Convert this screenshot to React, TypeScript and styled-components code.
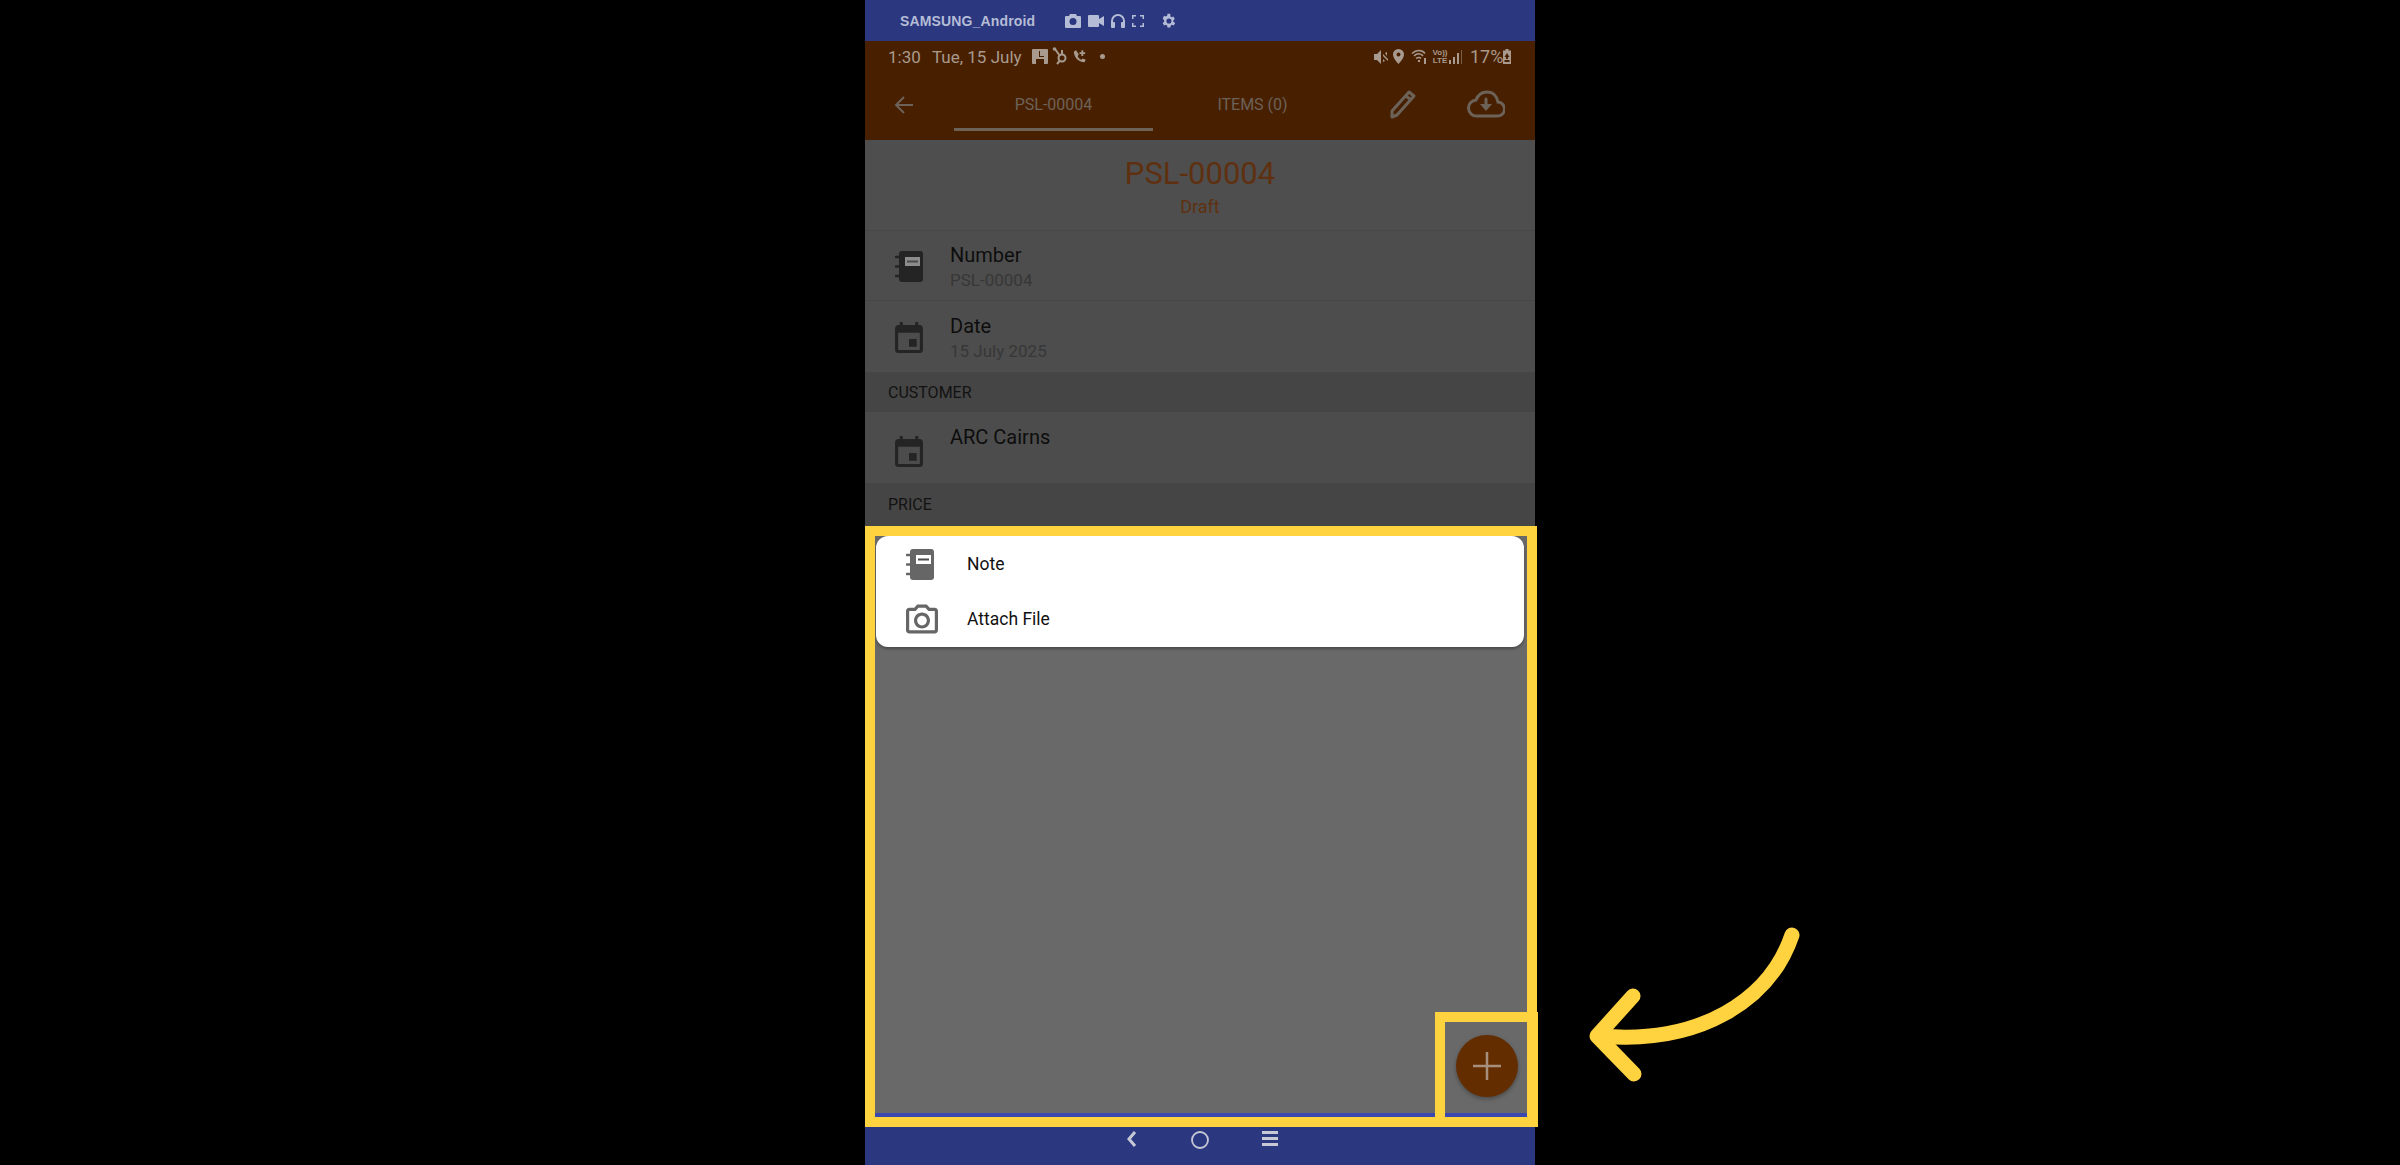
import React from 'react';
import styled, { createGlobalStyle } from 'styled-components';

const GlobalStyle = createGlobalStyle`
  html, body {
    margin: 0;
    padding: 0;
    background: #000;
  }
  body {
    font-family: Roboto, "Liberation Sans", sans-serif;
  }
  * {
    box-sizing: border-box;
  }
`;

const Page = styled.div`
  position: relative;
  width: 2400px;
  height: 1165px;
  overflow: hidden;
  background: #000;
  display: flex;
  justify-content: center;
`;

const Phone = styled.div`
  position: relative;
  width: 670px;
  height: 1165px;
  display: flex;
  flex-direction: column;
  background: #2b377f;
`;

const DeviceBar = styled.div`
  height: 41px;
  flex: none;
  display: flex;
  align-items: center;
  padding-left: 35px;
  background: #2b377f;
  color: #b4bcd6;
`;

const DeviceName = styled.span`
  font-family: "Liberation Sans", sans-serif;
  font-weight: 700;
  font-size: 14px;
  letter-spacing: 0.15px;
  width: 165px;
`;

const DeviceIcons = styled.div`
  display: flex;
  align-items: center;
  gap: 7px;
`;

const GapX = styled.span<{ $w: number }>`
  width: ${(p) => p.$w}px;
  flex: none;
`;

const AppHeader = styled.div`
  height: 99px;
  flex: none;
  display: flex;
  flex-direction: column;
  background: #482000;
`;

const StatusRow = styled.div`
  height: 31px;
  display: flex;
  align-items: center;
  justify-content: space-between;
  padding: 0 24px 0 23px;
  color: #a89a8e;
  font-size: 17px;
`;

const StatusGroup = styled.div`
  display: flex;
  align-items: center;
`;

const StatusTime = styled.span`
  width: 44px;
`;

const StatusDate = styled.span`
  width: 100px;
`;

const VoLte = styled.span`
  font-family: "Liberation Sans", sans-serif;
  font-size: 8px;
  line-height: 8px;
  font-weight: 700;
  width: 18px;
  margin-left: 3px;
  text-align: center;
`;

const BatteryLevel = styled.span`
  font-size: 18px;
  width: 30px;
  white-space: nowrap;
`;

const Battery = styled.span`
  display: flex;
  margin-left: 3px;
`;

const Toolbar = styled.div`
  flex: 1;
  display: flex;
  align-items: stretch;
  color: #6d6258;
  padding-left: 29px;
`;

const BackSlot = styled.div`
  width: 60px;
  display: flex;
  align-items: center;
  padding-bottom: 2px;
`;

const Tab = styled.div<{ $active?: boolean }>`
  width: 199px;
  display: flex;
  align-items: center;
  justify-content: center;
  font-size: 16px;
  padding-top: 8px;
  border-bottom: 3px solid ${(p) => (p.$active ? '#6d6258' : 'transparent')};
  margin-bottom: 9px;
`;

const ToolActions = styled.div`
  display: flex;
  align-items: center;
  padding: 0 0 4px 37px;
  gap: 50px;
`;

const TitleBlock = styled.div`
  height: 91px;
  flex: none;
  display: flex;
  flex-direction: column;
  align-items: center;
  padding-top: 16px;
  background: #4e4e4e;
  color: #5f3010;
  border-bottom: 1px solid #474747;
`;

const DocTitle = styled.div`
  font-size: 31px;
  line-height: 36px;
`;

const DocState = styled.div`
  font-size: 18px;
  line-height: 30px;
`;

const InfoRow = styled.div<{ $height: number }>`
  height: ${(p) => p.$height}px;
  flex: none;
  display: flex;
  align-items: center;
  padding-left: 30px;
  background: #4d4d4d;
  border-bottom: 1px solid #474747;
`;

const IconSlot = styled.div`
  width: 55px;
  flex: none;
  display: flex;
  padding-top: 2px;
  color: #242424;
`;

const InfoText = styled.div`
  display: flex;
  flex-direction: column;
  padding-top: 2px;
`;

const InfoLabel = styled.div`
  font-size: 20px;
  line-height: 26px;
  color: #0d0d0d;
`;

const InfoValue = styled.div`
  font-size: 17px;
  line-height: 24px;
  color: #373737;
`;

const CustomerRow = styled(InfoRow)`
  align-items: flex-start;
  padding-top: 22px;
  border-bottom: none;
  background: #4c4c4c;
`;

const CustomerName = styled(InfoLabel)`
  margin-top: -10px;
`;

const SectionHeader = styled.div<{ $height: number }>`
  height: ${(p) => p.$height}px;
  flex: none;
  display: flex;
  align-items: center;
  padding-left: 23px;
  font-size: 16px;
  color: #121212;
  background: #454545;
`;

const Backdrop = styled.div`
  flex: none;
  height: 591px;
  padding: 10px 11px 0;
  background: #696969;
  border-bottom: 4px solid #3b48ad;
`;

const ActionMenu = styled.div`
  height: 111px;
  display: flex;
  flex-direction: column;
  justify-content: center;
  background: #fff;
  border-radius: 12px;
  box-shadow: 0 2px 3px rgba(0, 0, 0, 0.3);
`;

const MenuItem = styled.div`
  height: 55px;
  display: flex;
  align-items: center;
  padding-left: 30px;
  color: #666;
`;

const MenuIcon = styled.div`
  width: 61px;
  flex: none;
  display: flex;
`;

const MenuLabel = styled.span`
  font-size: 17.5px;
  color: #111;
`;

const Fab = styled.button`
  position: absolute;
  left: 591px;
  top: 1035px;
  width: 62px;
  height: 62px;
  border: none;
  padding: 0;
  border-radius: 50%;
  display: flex;
  align-items: center;
  justify-content: center;
  background: #642d00;
  color: #a68f7c;
  box-shadow: 0 2px 4px rgba(0, 0, 0, 0.3);
`;

const NavBar = styled.div`
  flex: 1;
  display: flex;
  align-items: flex-start;
  justify-content: center;
  gap: 53px;
  margin-top: 10px;
  padding: 4px 0 0 3px;
  color: #c6c8d6;
`;

const Highlight = styled.div<{ $left: number; $top: number; $width: number; $height: number }>`
  position: absolute;
  left: ${(p) => p.$left}px;
  top: ${(p) => p.$top}px;
  width: ${(p) => p.$width}px;
  height: ${(p) => p.$height}px;
  border: 10px solid #ffd23f;
  pointer-events: none;
`;

const Pointer = styled.svg`
  position: absolute;
  left: 1580px;
  top: 920px;
  width: 230px;
  height: 170px;
`;

const Icon = ({ w, h, box, children }: { w: number; h: number; box: string; children: React.ReactNode }) => (
  <svg width={w} height={h} viewBox={box} fill="currentColor">
    {children}
  </svg>
);

const NotebookIcon = ({ label }: { label: string }) => (
  <Icon w={28} h={31} box="0 0 28 31">
    <path d="M7 0h18a3 3 0 0 1 3 3v25a3 3 0 0 1-3 3H7a3 3 0 0 1-3-3V3a3 3 0 0 1 3-3z" />
    <path d="M1 6h7M1 15.500h7M1 25h7" stroke="currentColor" strokeWidth="2.600" strokeLinecap="round" />
    <rect x="10" y="6" width="15" height="9" fill={label} />
    <rect x="12" y="9.500" width="11" height="2" fill="#4a4a4a" />
  </Icon>
);

const CalendarIcon = () => (
  <Icon w={28} h={31} box="3 1 18 20">
    <path d="M17 12h-5v5h5v-5zM16 1v2H8V1H6v2H5c-1.11 0-1.99.9-1.99 2L3 19c0 1.1.89 2 2 2h14c1.1 0 2-.9 2-2V5c0-1.1-.9-2-2-2h-1V1h-2zm3 18H5V8h14v11z" />
  </Icon>
);

const CameraIcon = () => (
  <Icon w={32} h={30} box="2 2 20 18">
    <path d="M14.12 4l1.83 2H20v12H4V6h4.05l1.83-2h4.24M15 2H9L7.17 4H4c-1.1 0-2 .9-2 2v12c0 1.1.9 2 2 2h16c1.1 0 2-.9 2-2V6c0-1.1-.9-2-2-2h-3.17L15 2zm-3 7c1.65 0 3 1.35 3 3s-1.35 3-3 3-3-1.35-3-3 1.35-3 3-3m0-2c-2.76 0-5 2.24-5 5s2.24 5 5 5 5-2.24 5-5-2.24-5-5-5z" />
  </Icon>
);

const DeviceIconSet = () => (
  <DeviceIcons>
    <Icon w={16} h={14} box="0 0 16 14">
      <path d="M5 0h6l1 2h3a1 1 0 0 1 1 1v10a1 1 0 0 1-1 1H1a1 1 0 0 1-1-1V3a1 1 0 0 1 1-1h3zM8 4a3.500 3.500 0 1 0 0 7 3.500 3.500 0 0 0 0-7z" fillRule="evenodd" />
    </Icon>
    <Icon w={16} h={12} box="0 0 16 12">
      <path d="M0 1a1 1 0 0 1 1-1h9a1 1 0 0 1 1 1v3l5-3v10l-5-3v3a1 1 0 0 1-1 1H1a1 1 0 0 1-1-1z" />
    </Icon>
    <Icon w={14} h={14} box="0 0 14 14">
      <path d="M7 0a7 7 0 0 0-7 7v6a1 1 0 0 0 1 1h2a1 1 0 0 0 1-1V9a1 1 0 0 0-1-1H2V7a5 5 0 0 1 10 0v1h-1a1 1 0 0 0-1 1v4a1 1 0 0 0 1 1h2a1 1 0 0 0 1-1V7a7 7 0 0 0-7-7z" />
    </Icon>
    <Icon w={12} h={12} box="0 0 12 12">
      <path d="M0 4V0h4v1.500H1.500V4zM8 0h4v4h-1.500V1.500H8zM0 8h1.500v2.500H4V12H0zM10.500 8H12v4H8v-1.500h2.500z" />
    </Icon>
    <GapX $w={3} />
    <Icon w={16} h={16} box="3 1 21 22">
      <path d="M19.400 13c.1-.3.1-.7.1-1s0-.7-.1-1l2.100-1.600-2-3.500-2.500 1c-.5-.4-1.100-.7-1.700-1L15.400 2h-4l-.4 2.900c-.6.300-1.200.6-1.700 1l-2.500-1-2 3.500L6.900 11c-.1.300-.1.700-.1 1s0 .7.100 1l-2.100 1.600 2 3.500 2.500-1c.5.400 1.100.7 1.700 1l.4 2.900h4l.4-2.900c.6-.3 1.200-.6 1.700-1l2.500 1 2-3.500zM13.400 15.500a3.500 3.500 0 1 1 0-7 3.500 3.500 0 0 1 0 7z" fillRule="evenodd" />
    </Icon>
  </DeviceIcons>
);

const StatusLeft = () => (
  <StatusGroup>
    <StatusTime>1:30</StatusTime>
    <StatusDate>Tue, 15 July</StatusDate>
    <Icon w={16} h={15} box="0 0 16 15">
      <path d="M1 0h14a1 1 0 0 1 1 1v13a1 1 0 0 1-1 1H1a1 1 0 0 1-1-1V1a1 1 0 0 1 1-1zM7 2v6h5V7H8V2zM4 10v5h8v-5z" fillRule="evenodd" />
    </Icon>
    <GapX $w={4} />
    <Icon w={16} h={19} box="0 0 16 19">
      <g fill="none" stroke="currentColor" strokeWidth="2">
        <circle cx="10" cy="11" r="3.500" />
        <path d="M3 2l5 7M10 7V3M7.500 14l-2.500 3" />
      </g>
      <circle cx="2.500" cy="2" r="1.800" />
    </Icon>
    <GapX $w={4} />
    <Icon w={15} h={15} box="0 0 24 24">
      <path d="M6.600 2 3 4c0 9 7 17 17 17l2-4-5-2-2 2c-3-1-5-3-6-6l2-2zM15 2h3v3h3v3h-3v3h-3V8h-3V5h3z" />
    </Icon>
    <GapX $w={13} />
    <Icon w={5} h={5} box="0 0 5 5">
      <circle cx="2.500" cy="2.500" r="2.500" />
    </Icon>
  </StatusGroup>
);

const StatusRight = () => (
  <StatusGroup>
    <Icon w={14} h={14} box="0 0 14 14">
      <path d="M0 4h3l4-4v14l-4-4H0zM9 4l5 5v2l-5-5zM9 9l2 2-2 1zM11 3l2-1v4z" />
    </Icon>
    <GapX $w={5} />
    <Icon w={11} h={15} box="0 0 11 15">
      <path d="M5.500 0A5.500 5.500 0 0 0 0 5.500C0 9.500 5.500 15 5.500 15S11 9.500 11 5.500A5.500 5.500 0 0 0 5.500 0zm0 7.500a2 2 0 1 1 0-4 2 2 0 0 1 0 4z" fillRule="evenodd" />
    </Icon>
    <GapX $w={7} />
    <Icon w={17} h={15} box="0 0 17 15">
      <g fill="none" stroke="currentColor" strokeWidth="1.500">
        <path d="M1 4.500c4-4 10-4 13 0M3 7c3-3 7-3 9 0M5 9.500c2-1.500 4-1.500 5 0" />
      </g>
      <path d="M7 11h2v2H7zM13 9h2v6h-2z" />
    </Icon>
    <VoLte>
      Vo))
      <br />
      LTE
    </VoLte>
    <Icon w={13} h={14} box="0 0 13 14">
      <path d="M0 10h2v4H0zM4 7h2v7H4zM8 3h2v11H8z" />
      <path d="M12 0h1v14h-1z" opacity="0.5" />
    </Icon>
    <GapX $w={8} />
    <BatteryLevel>17%</BatteryLevel>
    <Battery>
      <Icon w={8} h={15} box="0 0 8 15">
        <path d="M2.500 0h3v1.500H8V15H0V1.500h2.500zM4 4 1.500 8H3v2h2V8h1.500zM1.500 11v2h5v-2z" fillRule="evenodd" />
      </Icon>
    </Battery>
  </StatusGroup>
);

const Info = ({ icon, label, value, height }: { icon: React.ReactNode; label: string; value: string; height: number }) => (
  <InfoRow $height={height}>
    <IconSlot>{icon}</IconSlot>
    <InfoText>
      <InfoLabel>{label}</InfoLabel>
      <InfoValue>{value}</InfoValue>
    </InfoText>
  </InfoRow>
);

const App = (): React.ReactElement => (
  <Page>
    <GlobalStyle />
    <Phone>
      <DeviceBar>
        <DeviceName>SAMSUNG_Android</DeviceName>
        <DeviceIconSet />
      </DeviceBar>

      <AppHeader>
        <StatusRow>
          <StatusLeft />
          <StatusRight />
        </StatusRow>
        <Toolbar>
          <BackSlot>
            <svg width="20" height="20" viewBox="0 0 20 20" fill="none" stroke="currentColor" strokeWidth="2">
              <path d="M19 10H2M10 2l-8 8 8 8" />
            </svg>
          </BackSlot>
          <Tab $active>PSL-00004</Tab>
          <Tab>ITEMS (0)</Tab>
          <ToolActions>
            <svg width="28" height="30" viewBox="0 0 28 30" fill="none" stroke="currentColor" strokeWidth="3" strokeLinejoin="round">
              <path d="M3 22 20 3l5 4L8 26l-5 2zM17 7l5 4" />
            </svg>
            <svg width="38" height="28" viewBox="0 0 38 28" fill="none" stroke="currentColor" strokeWidth="3" strokeLinecap="round">
              <path d="M10 26a8 8 0 0 1-1-16C11 5 15 2 20 2c6 0 10 4 11 10a7 7 0 0 1-1 14z" />
              <path d="M19 9v9" />
              <path d="M13 14h12l-6 7z" fill="currentColor" stroke="none" />
            </svg>
          </ToolActions>
        </Toolbar>
      </AppHeader>

      <TitleBlock>
        <DocTitle>PSL-00004</DocTitle>
        <DocState>Draft</DocState>
      </TitleBlock>

      <Info icon={<NotebookIcon label="#8c8c8c" />} label="Number" value="PSL-00004" height={70} />
      <Info icon={<CalendarIcon />} label="Date" value="15 July 2025" height={72} />

      <SectionHeader $height={39}>CUSTOMER</SectionHeader>
      <CustomerRow $height={71}>
        <IconSlot>
          <CalendarIcon />
        </IconSlot>
        <CustomerName>ARC Cairns</CustomerName>
      </CustomerRow>
      <SectionHeader $height={43}>PRICE</SectionHeader>

      <Backdrop>
        <ActionMenu>
          <MenuItem>
            <MenuIcon>
              <NotebookIcon label="#fff" />
            </MenuIcon>
            <MenuLabel>Note</MenuLabel>
          </MenuItem>
          <MenuItem>
            <MenuIcon>
              <CameraIcon />
            </MenuIcon>
            <MenuLabel>Attach File</MenuLabel>
          </MenuItem>
        </ActionMenu>
      </Backdrop>

      <NavBar>
        <svg width="12" height="16" viewBox="0 0 12 16" fill="none" stroke="currentColor" strokeWidth="3">
          <path d="M9 1 3 8l6 7" />
        </svg>
        <svg width="18" height="18" viewBox="0 0 18 18" fill="none" stroke="currentColor" strokeWidth="1.800">
          <circle cx="9" cy="9" r="8" />
        </svg>
        <svg width="16" height="15" viewBox="0 0 16 15" fill="currentColor">
          <path d="M0 0h16v3H0zM0 6h16v3H0zM0 12h16v3H0z" />
        </svg>
      </NavBar>

      <Fab aria-label="Add">
        <svg width="28" height="28" viewBox="0 0 28 28" fill="none" stroke="currentColor" strokeWidth="2.500">
          <path d="M14 0v28M0 14h28" />
        </svg>
      </Fab>

      <Highlight $left={0} $top={526} $width={672} $height={601} />
      <Highlight $left={570} $top={1012} $width={103} $height={115} />
    </Phone>

    <Pointer viewBox="1580 920 230 170" fill="none" stroke="#ffd23f" strokeWidth="15" strokeLinecap="round" strokeLinejoin="round">
      <path d="M1792 935C1770 1000 1700 1045 1600 1036" />
      <path d="M1633 996 1597 1036 1634 1074" />
    </Pointer>
  </Page>
);

export default App;
